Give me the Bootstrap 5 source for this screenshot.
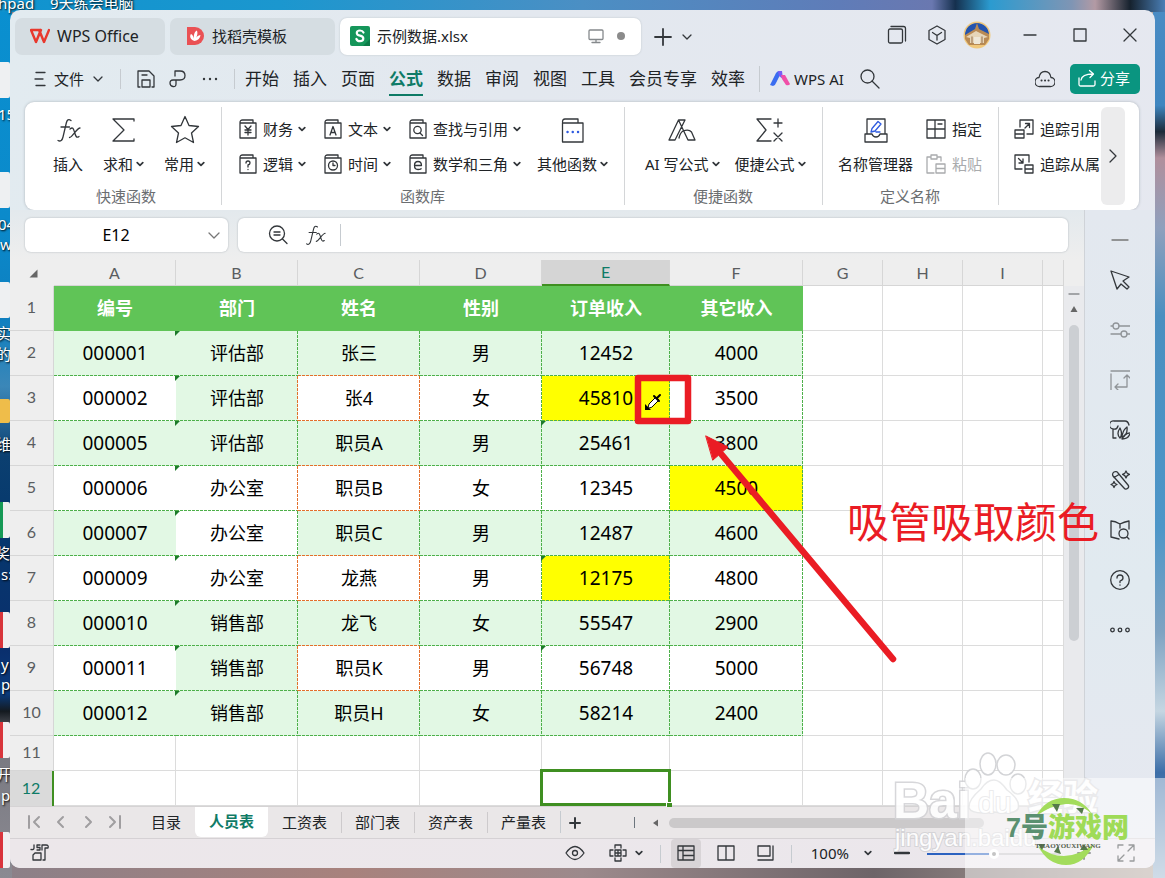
<!DOCTYPE html>
<html lang="zh-CN">
<head>
<meta charset="utf-8">
<meta name="viewport" content="width=device-width, initial-scale=1">
<title>示例数据.xlsx - WPS Office</title>
<link href="https://cdn.jsdelivr.net/npm/bootstrap@5.3.0/dist/css/bootstrap.min.css" rel="stylesheet">
<style>
:root{--ink:#33373b;--teal:#0f7b66;--dash:#4db04a;--warm:#e3702c;--mint:#e2f8e4}
body{font-family:"Noto Sans","Noto Sans CJK SC",sans-serif;font-size:15px;color:#202326;overflow:hidden;
  background:linear-gradient(90deg,#1093cf 0,#1b97cf 24%,#4b8fc4 50%,#5f7cb8 72%,#6a78b0 80%,#15304e 82%,#2b9bd0 85%,#7f95b4 92%,#b39aa4 94%,#16222e 97%,#4a7fb6 100%) top/100% 12px no-repeat,
  linear-gradient(#0a90d0 0,#0b8acb 25%,#0d7fc0 36%,#3b87b8 44%,#0b3f70 52%,#06386d 60%,#0a2f6d 74%,#0a3b7c 79%,#141a20 81%,#77777f 84%,#8b8a92 100%) left/12px 100% no-repeat,
  linear-gradient(#4b8cc4 0,#3f86c0 12%,#1d2b3a 15%,#b08f9c 18%,#8fa0bd 26%,#4a8fc0 36%,#4d96c8 60%,#7fa3c2 72%,#c5d6e2 81%,#3c6ea8 88%,#9fb8cf 100%) right/12px 100% no-repeat,
  linear-gradient(90deg,#8b8088,#a8827d 30%,#9c8a8c 50%,#6d6468 75%,#b7a9a0 100%)}
.desk{position:absolute;inset:0;overflow:hidden;color:#fff;text-shadow:1px 1px 2px #000}
.desk span,.desk i{position:absolute;white-space:nowrap;line-height:20px}
.desk i{left:-14px;width:24px;height:36px;background:#eef0f2;border-radius:2px}
.desk i.red{background:linear-gradient(90deg,#d9343c 17px,#f1eef0 17px)}
.desk i.grn{background:linear-gradient(90deg,#169a55 17px,#eef0ee 17px)}
.desk i.fold{background:#efbd4a;height:24px}
.app{position:relative;margin:10px;min-height:calc(100vh - 20px);border-radius:10px;overflow:hidden;white-space:nowrap;
  background:linear-gradient(100deg,#e2ebf0 0,#e3e8ef 40%,#e6e8f0 100%)}
svg{display:block;fill:none;stroke:var(--ink);stroke-width:1.3;stroke-linecap:round;stroke-linejoin:round;flex:none}
.tool{display:flex;align-items:center;padding:0;border:0;border-radius:4px;background:none;color:inherit;font-size:15px;line-height:24px}
.car{width:8px;height:8px;margin-left:3px;stroke-width:1.7}
.vr2{width:1px;background:#c6cbd0}
/* title tabs */
.titles{height:52px;padding:8px 0 0 5px;gap:5px}
.doc{height:37px;border-radius:7px;background:#d5dde2;padding:0 15px;width:150px;gap:7px;padding-bottom:2px}
.doc.home{font-size:16px}
.doc.find{width:165px}
.doc.on{background:#fff;box-shadow:0 0 2px #b9c0c6;padding:0 10px 2px;width:301px}
.w40{width:40px;justify-content:center}.w50{width:50px;justify-content:center}
/* menu */
.menu{height:34px;padding:0 15px 0 24px}
.menu .tool{padding-bottom:1px}
.menu nav{gap:14px}
.menu nav a{font-size:17px;line-height:28px;color:#202326;text-decoration:none;padding-bottom:3px;margin-top:3px}
.menu nav a.on{color:var(--teal);font-weight:700;border-bottom:2px solid var(--teal);padding-bottom:1px}
.menu .share{background:#0a9580;color:#fff;width:70px;height:30px;border-radius:5px;font-size:15px;padding:0 8px 2px;border:0}
/* ribbon */
.ribbon{height:108px;margin:6px 16px 0 15px;background:#fff;border-radius:9px;box-shadow:0 0 3px #aab2b9;overflow:hidden}
.grp{position:relative;padding:9px 0 0 16px;flex:none}
.grp+.grp::before{content:"";position:absolute;left:0;top:5px;bottom:5px;width:1px;background:#d4d6d8}
.grp>.d-flex{height:72px;align-items:flex-start}
.cap{line-height:20px;color:#6b6e71;margin:3px 0 0 -16px;text-align:center}
.grp:first-child .cap{margin-left:-10px}
.big{flex-direction:column}
.big>svg{height:36px;margin-top:1px}
.big>span{display:flex;align-items:center;line-height:32px}
.duo{display:grid;grid-template-rows:35px 35px;grid-auto-flow:column;column-gap:18px;align-content:start}
.duo .tool>svg:first-child{margin-right:6px}
.duo .car{margin-left:5px}
.more{width:24px;height:98px;margin:5px 14px 5px auto;background:#ececed;border-radius:6px;justify-content:center}
/* formula bar */
.fx{padding:8px 16px 8px 15px;gap:10px}
.box{height:34px;background:#fff;border-radius:6px;box-shadow:0 0 2px #a9b0b6}
.box input{border:0;background:none;outline:0;min-width:0;font-size:16px}
/* sheet */
.left{min-width:0;background:linear-gradient(#e3e9ed,#eeeeee 50px)}
.sheet{table-layout:fixed;width:100%;border-collapse:separate;border-spacing:0;background:#fff}
.sheet th,.sheet td{padding:0 0 2px;text-align:center;vertical-align:middle;border:0 solid #dcdcdc;border-width:0 1px 1px 0;font-size:19px;line-height:24px;color:#000;font-weight:400}
.sheet thead th,.sheet tbody th{font:16px/24px Lato,sans-serif;color:#5a5d60;background:#eee;border-color:#d6d6d6}
.sheet thead th{height:26px;padding:0}
.sheet thead th:first-child{border-right:0;border-bottom:0}
.sheet thead th.on{background:#d5d5d5;color:var(--teal);border-bottom:2px solid #3f8f21}
.sheet tr.h td.k{background:#60c457;color:#fff;font-weight:700;font-size:18px;border:0}
.sheet tr.r,.sheet tr.h{height:45px}
.sheet tr.e{height:35px}
.sheet tr.e.on th{background:#dadada;color:var(--teal);border-right:2px solid #3f8f21;border-bottom:0}
.sheet td.d{--rc:var(--dash);--bc:var(--dash);border:0;position:relative;
  background-image:repeating-linear-gradient(var(--rc) 0 3px,transparent 3px 4px),repeating-linear-gradient(90deg,var(--bc) 0 3px,transparent 3px 4px);
  background-position:right top,left bottom;background-size:1px 100%,100% 1px;background-repeat:no-repeat}
.sheet tr.r.g td.d{background-color:var(--mint)}
.sheet tr.r.g td:nth-child(4){--bc:var(--warm)}
.sheet tr.r.o td:nth-child(3){--rc:var(--warm)}
.sheet tr.r.o td:nth-child(4){--rc:var(--warm);--bc:var(--warm)}
.sheet tr.r td:nth-child(2){--rc:transparent}
.sheet tr.r.z td:nth-child(4){--bc:var(--dash)}
.sheet td.zh{font-size:18px}
.sheet td.m{background-color:var(--mint)}
.sheet tr.r.g td.w{background-color:#fff}
.sheet td.y,.sheet tr.r.g td.y{background-color:#ff0}
.flag::before{content:"";position:absolute;left:-1px;top:0;border:solid transparent;border-width:5px 5px 0 0;border-top-color:#1d7a2a}
.cur{position:relative}
.cur::after{content:"";position:absolute;inset:-2px -2px -1px -2px;border:3px solid #3f8f21}
.cur::before{content:"";position:absolute;right:-3px;bottom:-2px;width:5px;height:4px;background:#3f8f21;border:solid #fff;border-width:1px 0 0 1px;z-index:1;box-sizing:content-box}
.vbar{width:20px;flex:none;margin-top:26px;background:#e9eaed;align-items:center}
.vbar b{width:10px;height:316px;border-radius:5px;background:#cccfd3;margin-top:11px}
.tabs{height:32px;background:#eae7e8;border-top:1px solid #d5d3d4}
.tabs a{color:#202326;text-decoration:none;line-height:31px;padding:0 14px;position:relative}
.tabs a+a+a+a::before{content:"";position:absolute;left:0;top:5px;bottom:5px;width:1px;background:#cdcacc}
.tabs a.on{background:#fff;color:var(--teal);font-weight:700;border-radius:0 0 6px 6px;line-height:28px;height:30px}
.pager{gap:13px;height:30px;padding:0 15px 0 17px}
.hbar{height:10px;border-radius:5px;background:#cbc9ca}
.side{width:71px;flex:none;border-left:1px solid #cfd3d8;background:linear-gradient(#e3e8ef,#e1eaf0 60%,#e6e8f0);align-items:center;padding-top:15px}
.side .tool{width:40px;height:50px;justify-content:center}
.side .tool.mini{height:30px}
.status{height:30px;background:linear-gradient(90deg,#ece7ea,#ebe7ec);border-top:1px solid #d5d1d4}
.status .tool{padding-bottom:1px}
.view{width:30px;height:29px;border-radius:4px;justify-content:center}
.view.on{background:#d8d4d7}
input.zoomer{appearance:none;width:133px;height:12px;background:linear-gradient(90deg,#2b62c0 50%,#c4c2c6 50%) center/100% 2px no-repeat}
input.zoomer::-webkit-slider-thumb{appearance:none;width:10px;height:10px;border-radius:50%;border:3px solid #fff;background:#888}
/* marks lying over the window */
.over{position:absolute;pointer-events:none}
.note{left:837px;top:487px;font-size:42px;line-height:50px;color:#ea1c24}
.veil{left:965px;top:778px;right:0;bottom:0;background:rgba(255,255,255,.5)}
.wm{color:#fff;-webkit-text-stroke:3px #d3d3d6;paint-order:stroke fill;opacity:.9;font-family:"Liberation Sans","Noto Sans CJK SC",sans-serif}
.wm.thin{-webkit-text-stroke-width:2px}
.seven{left:1006px;top:810px;font:900 27px/36px "Liberation Sans","Noto Sans CJK SC",sans-serif;color:#5b9070;white-space:nowrap}
.seven em{font-style:normal;color:#9fdb57}
</style>
</head>
<body>
<svg width="0" height="0" style="position:absolute"><defs>
<symbol id="car" viewBox="0 0 8 8"><path d="M1.2 2.6 4 5.4 6.800 2.600"/></symbol>
<symbol id="bk" viewBox="0 0 18 20"><path d="M1 3.500 Q1 1 3.500 1H14V4M1 4H17V19H1Z"/></symbol>
<symbol id="fxi" viewBox="0 0 26 26"><path d="M16 3.500C13.500 1.500 12 3 11.300 6L8 20C7.400 23 5.500 25 3 23.500M6 10H14.500M15 12C18 9.500 18.500 12 19.500 15C20.500 19 21.500 21.500 24 19.500M25 11C22 11 17 20.500 14.500 20.500"/></symbol>
</defs></svg>

<div class="desk" aria-hidden="true">
<span style="left:-2px;top:-7px">hpad</span><span style="left:50px;top:-7px">9天练会电脑</span>
<i style="top:62px"></i><span style="left:-2px;top:104px">15</span><i style="top:172px"></i><span style="left:-2px;top:214px">04</span><span style="left:0;top:234px">w</span>
<i style="top:282px"></i><span style="left:-4px;top:323px">实</span><span style="left:-4px;top:344px">的</span><i class="fold" style="top:399px"></i><span style="left:-4px;top:434px">维</span>
<i class="grn" style="top:502px"></i><span style="left:-5px;top:543px">奖励</span><span style="left:1px;top:564px">s:</span><i class="red" style="top:612px"></i><span style="left:1px;top:654px">y</span><span style="left:1px;top:674px">p</span>
<i class="red" style="top:722px"></i><span style="left:-4px;top:764px">开</span><span style="left:1px;top:785px">p</span><i class="red" style="top:832px"></i>
</div>

<div class="app d-flex flex-column">
<header>
 <div class="titles d-flex align-items-start">
  <button class="tool doc home"><svg width="20" height="16" viewBox="0 0 20 16" style="stroke:#e8382d;stroke-width:2.400"><path d="M1 2 6 14 10 4 14 14 19 2M1 2H10.500M14 14 9 2M6 14 11 2"/></svg>WPS Office</button>
  <button class="tool doc find"><svg width="20" height="20" viewBox="0 0 20 20" style="stroke:none"><path fill="#ea5154" d="M2 1H10A9 9 0 0 1 10 19H2Z"/><path fill="#fff" d="M9.500 15C4 13 5 9 6 8Q8.500 9 9.500 15C8 9 9.500 5.500 12 4.500Q13.500 9 9.500 15C11 11 13 9 15.500 9Q15 14 9.500 15"/></svg>找稻壳模板</button>
  <button class="tool doc on"><svg width="20" height="20" viewBox="0 0 20 20" style="stroke:none"><rect width="20" height="20" rx="2" fill="#15965a"/><path fill="#0b7a47" d="M13 20H20V13Z"/><path d="M13.500 6.500Q12.500 4.500 10 4.500 6.800 4.500 6.800 7 6.800 9 10 9.600 13.300 10.200 13.300 12.500 13.300 15.200 10 15.200 7.300 15.200 6.400 13" fill="none" stroke="#fff" stroke-width="2.200"/></svg>示例数据.xlsx
   <svg class="ms-auto" width="16" height="16" viewBox="0 0 16 16" style="stroke:#85898c"><rect x="1" y="2" width="14" height="9.500" rx="1"/><path d="M8 12V14M4 14.500H12"/></svg>
   <svg class="ms-1 me-1" width="12" height="12" viewBox="0 0 12 12" style="stroke:none;fill:#8b8b8b"><circle cx="6" cy="6" r="4"/></svg></button>
  <button class="tool ms-2" style="height:37px" aria-label="新建"><svg width="18" height="18" viewBox="0 0 18 18" style="stroke-width:1.800"><path d="M9 1V17M1 9H17"/></svg></button>
  <button class="tool ms-1" style="height:37px" aria-label="列表"><svg width="12" height="12" viewBox="0 0 12 12"><path d="M2 4 6 8 10 4"/></svg></button>
  <div class="d-flex ms-auto align-items-center" style="height:34px">
   <button class="tool w40" aria-label="窗口"><svg width="20" height="20" viewBox="0 0 20 20"><rect x="1.500" y="4" width="14" height="14" rx="1.500"/><path d="M4 1.500H16.500Q18.500 1.500 18.500 3.500V16"/></svg></button>
   <button class="tool w40" aria-label="模型"><svg width="20" height="20" viewBox="0 0 20 20"><path d="M10 1 18 5.500V14.500L10 19 2 14.500V5.500ZM5.500 7.500 10 10.500 14.500 7.500M10 10.500V15"/></svg></button>
   <button class="tool w40 me-2" aria-label="账户"><svg width="28" height="28" viewBox="0 0 28 28" style="stroke:none"><circle cx="14" cy="14" r="13.500" fill="#f0c87c"/><path d="M2 14A12 12 0 0 1 26 14Z" fill="#2454ae"/><path d="M2 14 12 8 14 2 16 8 26 13V18L22 24H6L2 18Z" fill="#b98a54"/><path d="M3 16 13 10 25 16 21 17V22H7V17Z" fill="#e6d5b8"/><path d="M9 16V22M19 16V22" stroke="#a98662"/><path d="M11 16H17V23H11Z" fill="#eee7d8"/></svg></button>
   <button class="tool w50" aria-label="最小化"><svg width="14" height="14" viewBox="0 0 14 14"><path d="M1 7H13"/></svg></button>
   <button class="tool w50" aria-label="最大化"><svg width="14" height="14" viewBox="0 0 14 14"><path d="M1 1H13V13H1Z"/></svg></button>
   <button class="tool w50" aria-label="关闭"><svg width="14" height="14" viewBox="0 0 14 14"><path d="M1 1 13 13M13 1 1 13"/></svg></button>
  </div>
 </div>
 <div class="menu d-flex align-items-center">
  <button class="tool"><svg width="12" height="16" viewBox="0 0 12 16"><path d="M2 1.500H11M1 8H9M2 14.500H11"/></svg><span class="mx-2">文件</span><svg width="12" height="12" viewBox="0 0 12 12"><path d="M2 4 6 8 10 4"/></svg></button>
  <span class="vr2 mx-3" style="height:20px"></span>
  <button class="tool" aria-label="保存"><svg width="18" height="18" viewBox="0 0 18 18"><path d="M3 17H1V1H12L17 6V17H15M5 17V10H13V17ZM5 5H10"/></svg></button>
  <button class="tool" style="margin-left:14px" aria-label="画笔"><svg width="18" height="18" viewBox="0 0 18 18"><path d="M6 6V1H11Q16 1 16 5.500T11 10H4Q1 10 1 13T4 16.500 7 14V10"/></svg></button>
  <button class="tool" style="margin-left:14px" aria-label="更多"><svg width="18" height="6" viewBox="0 0 18 6" style="stroke:none;fill:#33373b"><circle cx="3" cy="3" r="1.200"/><circle cx="9" cy="3" r="1.200"/><circle cx="15" cy="3" r="1.200"/></svg></button>
  <span class="vr2" style="height:20px;margin:0 10px 0 15px"></span>
  <nav class="d-flex align-items-center"><a href="#">开始</a><a href="#">插入</a><a href="#">页面</a><a href="#" class="on">公式</a><a href="#">数据</a><a href="#">审阅</a><a href="#">视图</a><a href="#">工具</a><a href="#">会员专享</a><a href="#">效率</a></nav>
  <span class="vr2" style="height:26px;margin:0 10px 0 14px"></span>
  <button class="tool"><svg width="20" height="18" viewBox="0 0 20 18" style="stroke:none"><path fill="#3b6df0" d="M0 15 6 3Q7 1 10 1H12L6 13Q5 16 3 16Z"/><path fill="#7b5cf5" d="M8 1H12L13 9 9 6Z"/><path fill="#f04fa8" d="M11 5H15L20 14Q19 16 16 15L12 9Z"/></svg><span class="ms-1">WPS AI</span></button>
  <button class="tool ms-3" aria-label="搜索"><svg width="20" height="20" viewBox="0 0 20 20"><circle cx="7.500" cy="7.500" r="6.500"/><path d="M12 12 19 19"/></svg></button>
  <button class="tool ms-auto" aria-label="云"><svg width="20" height="18" viewBox="0 0 20 18"><path d="M5 16.500A4.500 4.500 0 0 1 4 7.500Q5 1.500 10 1.500T16 7.500A4.500 4.500 0 0 1 15 16.500Z"/><path d="M6.500 10.500H6.600M10 10.500H10.100M13.500 10.500H13.600" stroke-width="2"/></svg></button>
  <button class="tool share" style="margin-left:15px"><svg width="18" height="18" viewBox="0 0 18 18" style="stroke:#fff"><path d="M1 9V15.500Q1 17 2.500 17H15.500Q17 17 17 15.500V12M3 11Q4 5 15 5M11.500 1.500 15.500 5 12 8.500"/></svg><span class="ms-1">分享</span></button>
 </div>
</header>

<section class="ribbon d-flex">
 <div class="grp" style="width:196px">
  <div class="d-flex" style="gap:20px;padding-left:12px">
   <button class="tool big"><svg width="30" viewBox="-2 -5 30 36"><use href="#fxi" width="26" height="26"/></svg><span>插入</span></button>
   <button class="tool big"><svg width="24" viewBox="0 -6 24 36"><path d="M22 3V1H1L12 12 1 23H22V21"/></svg><span>求和<svg class="car"><use href="#car"/></svg></span></button>
   <button class="tool big"><svg width="30" viewBox="0 -3 30 36"><path d="M15 1.500 19 10.500 28.500 11.500 21.500 18 23.500 27.500 15 22.800 6.500 27.500 8.500 18 1.500 11.500 11 10.500Z"/></svg><span>常用<svg class="car"><use href="#car"/></svg></span></button>
  </div><div class="cap">快速函数</div>
 </div>
 <div class="grp" style="width:403px">
  <div class="d-flex" style="gap:16px;padding-left:2px"><div class="duo">
   <button class="tool"><svg width="18" height="20"><use href="#bk"/><path d="M6 7 9 10.500 12 7M6 11H12M6 13.500H12M9 10.500V16"/></svg>财务<svg class="car"><use href="#car"/></svg></button>
   <button class="tool"><svg width="18" height="20"><use href="#bk"/><path d="M7 9Q7 7 9 7T11 9Q11 10.500 9 11V13M9 15.500V15.600"/></svg>逻辑<svg class="car"><use href="#car"/></svg></button>
   <button class="tool"><svg width="18" height="20"><use href="#bk"/><path d="M6 16 9 7.500 12 16M7 13.500H11"/></svg>文本<svg class="car"><use href="#car"/></svg></button>
   <button class="tool"><svg width="18" height="20"><use href="#bk"/><circle cx="9" cy="11.500" r="4.500"/><path d="M9 9V11.500H11"/></svg>时间<svg class="car"><use href="#car"/></svg></button>
   <button class="tool"><svg width="18" height="20"><use href="#bk"/><circle cx="8.500" cy="11" r="3.700"/><path d="M11 14 13.500 16.500"/></svg>查找与引用<svg class="car"><use href="#car"/></svg></button>
   <button class="tool"><svg width="18" height="20"><use href="#bk"/><path d="M5.500 11.500H12.500Q12.500 7.500 9 7.500T5.500 11.500 9 15.500 12 14.500"/></svg>数学和三角<svg class="car"><use href="#car"/></svg></button>
  </div>
  <button class="tool big"><svg width="24" viewBox="0 -6 24 36"><path d="M1.500 4Q1.500 1 4 1H17V5M1.500 5H22V24H1.500Z"/><path d="M6.500 14H6.600M11.700 14H11.800M17 14H17.100" stroke="#2f5be0" stroke-width="2.400"/></svg><span>其他函数<svg class="car"><use href="#car"/></svg></span></button></div>
  <div class="cap">函数库</div>
 </div>
 <div class="grp" style="width:198px">
  <div class="d-flex" style="gap:15px;padding-left:5px">
   <button class="tool big"><svg width="28" viewBox="0 -7 28 36"><path d="M10.500 1H17L7 21H1ZM10.500 1 20 21H27L23.500 13Q21 10 15 12M15 12Q12 14 11 19"/></svg><span>AI 写公式<svg class="car"><use href="#car"/></svg></span></button>
   <button class="tool big"><svg width="28" viewBox="0 -6 28 36"><path d="M15 1H1L10 12 1 23H15M18 5H26M22 1V9M18 15 26 23M26 15 18 23"/></svg><span>便捷公式<svg class="car"><use href="#car"/></svg></span></button>
  </div><div class="cap">便捷函数</div>
 </div>
 <div class="grp" style="width:176px">
  <div class="d-flex" style="gap:13px">
   <button class="tool big"><svg width="24" viewBox="0 -6 24 36"><path d="M3 16V1H21V16M1 16H8Q9 19 12 19T16 16H23V24H1Z"/><path d="M7 14 8 10.500 14 3.500 17 6 11 13ZM12 14H16" stroke="#2f5be0"/></svg><span>名称管理器</span></button>
   <div class="duo"><button class="tool"><svg width="20" height="20"><path d="M9 1H1V19H9V1M1 10H9M9 1H19V19H9M9 10H19M12 5H16"/></svg>指定</button>
   <button class="tool" disabled style="color:#a9abad"><svg width="20" height="20" style="stroke:#a9abad"><path d="M4 3H1V19H8M12 3H15V7M5 1H11V5H5ZM10 10H19V19H10ZM10 14.500H19"/></svg>粘贴</button></div>
  </div><div class="cap">定义名称</div>
 </div>
 <div class="grp overflow-hidden" style="width:102px">
  <div class="duo"><button class="tool"><svg width="20" height="20"><path d="M6 8V1H19V15H13M1 11H10V19H1ZM1 15H10M11 9 15.500 4.500M11.500 4.500H15.500V8.500"/></svg>追踪引用</button>
  <button class="tool"><svg width="20" height="20"><path d="M8 15H1V1H15V8M11 11H19V19H11ZM11 15H19M4.500 4.500 9 9M9 5V9H5"/></svg>追踪从属</button></div>
 </div>
 <button class="tool more" aria-label="展开"><svg width="10" height="14" viewBox="0 0 10 14"><path d="M2 1 8 7 2 13"/></svg></button>
</section>

<div class="d-flex flex-grow-1">
 <main class="left d-flex flex-column flex-grow-1">
  <div class="fx d-flex">
   <div class="box d-flex align-items-center" style="width:203px"><input class="text-center ms-3" style="width:150px" aria-label="名称框" value="E12"><button class="tool ms-2 ps-2" aria-label="选择"><svg width="14" height="10" viewBox="0 0 14 10" style="stroke:#777"><path d="M2 3 7 8 12 3"/></svg></button></div>
   <div class="box d-flex align-items-center flex-grow-1 ps-4">
    <button class="tool" style="margin-left:5px" aria-label="查看"><svg width="22" height="20" viewBox="0 0 22 20"><circle cx="10" cy="8.500" r="7.500"/><path d="M15.500 14 20 18.500M7 7H13M7 10H13"/></svg></button>
    <button class="tool" style="margin-left:15px" aria-label="插入函数"><svg width="22" height="22"><use href="#fxi"/></svg></button>
    <span class="vr2 me-2" style="height:22px;margin-left:14px"></span><input class="flex-grow-1" aria-label="编辑栏">
   </div>
  </div>
  <div class="d-flex flex-grow-1">
   <table class="sheet">
    <colgroup><col style="width:44px"><col style="width:122px"><col style="width:122px"><col style="width:122px"><col style="width:122px"><col style="width:128px"><col style="width:133px"><col style="width:80px"><col style="width:80px"><col style="width:80px"><col></colgroup>
    <thead><tr><th><svg class="ms-auto me-3" width="9" height="9"><path d="M8.500 .5V8.500H.5Z" fill="#666" stroke="none"/></svg></th><th>A</th><th>B</th><th>C</th><th>D</th><th class="on">E</th><th>F</th><th>G</th><th>H</th><th>I</th><th></th></tr></thead>
    <tbody>
    <tr class="h"><th>1</th><td class="k">编号</td><td class="k">部门</td><td class="k">姓名</td><td class="k">性别</td><td class="k">订单收入</td><td class="k">其它收入</td><td></td><td></td><td></td><td></td></tr>
    <tr class="r g"><th>2</th><td class="d">000001</td><td class="d zh flag">评估部</td><td class="d zh">张三</td><td class="d zh">男</td><td class="d">12452</td><td class="d">4000</td><td></td><td></td><td></td><td></td></tr>
    <tr class="r o"><th>3</th><td class="d">000002</td><td class="d zh m flag">评估部</td><td class="d zh">张4</td><td class="d zh">女</td><td class="d y">45810</td><td class="d">3500</td><td></td><td></td><td></td><td></td></tr>
    <tr class="r g"><th>4</th><td class="d">000005</td><td class="d zh flag">评估部</td><td class="d zh">职员A</td><td class="d zh">男</td><td class="d flag">25461</td><td class="d">3800</td><td></td><td></td><td></td><td></td></tr>
    <tr class="r o"><th>5</th><td class="d">000006</td><td class="d zh flag">办公室</td><td class="d zh">职员B</td><td class="d zh">女</td><td class="d">12345</td><td class="d y">4500</td><td></td><td></td><td></td><td></td></tr>
    <tr class="r g"><th>6</th><td class="d">000007</td><td class="d zh w flag">办公室</td><td class="d zh">职员C</td><td class="d zh">男</td><td class="d">12487</td><td class="d">4600</td><td></td><td></td><td></td><td></td></tr>
    <tr class="r o"><th>7</th><td class="d">000009</td><td class="d zh flag">办公室</td><td class="d zh">龙燕</td><td class="d zh">男</td><td class="d y flag">12175</td><td class="d">4800</td><td></td><td></td><td></td><td></td></tr>
    <tr class="r g"><th>8</th><td class="d">000010</td><td class="d zh flag">销售部</td><td class="d zh">龙飞</td><td class="d zh">女</td><td class="d">55547</td><td class="d">2900</td><td></td><td></td><td></td><td></td></tr>
    <tr class="r o"><th>9</th><td class="d">000011</td><td class="d zh m flag">销售部</td><td class="d zh">职员K</td><td class="d zh">男</td><td class="d flag">56748</td><td class="d">5000</td><td></td><td></td><td></td><td></td></tr>
    <tr class="r g z"><th>10</th><td class="d">000012</td><td class="d zh flag">销售部</td><td class="d zh">职员H</td><td class="d zh">女</td><td class="d">58214</td><td class="d">2400</td><td></td><td></td><td></td><td></td></tr>
    <tr class="e"><th>11</th><td></td><td></td><td></td><td></td><td></td><td></td><td></td><td></td><td></td><td></td></tr>
    <tr class="e on"><th>12</th><td></td><td></td><td></td><td></td><td class="cur"></td><td></td><td></td><td></td><td></td><td></td></tr>
    </tbody>
   </table>
   <div class="vbar d-flex flex-column"><svg class="mt-1" width="12" height="24" viewBox="0 0 12 24"><path d="M1 4H11" stroke="#8a8d90"/><path d="M6 16 9.500 22H2.500Z" fill="#666" stroke="none"/></svg><b></b></div>
  </div>
  <div class="tabs d-flex align-items-start">
   <div class="pager d-flex align-items-center">
    <button class="tool" aria-label="首个"><svg width="14" height="14" style="stroke:#a09ea0;stroke-width:2"><path d="M2 1V13M12 2 7 7 12 12"/></svg></button>
    <button class="tool" aria-label="上一个"><svg width="14" height="14" style="stroke:#a09ea0;stroke-width:2"><path d="M9 2 4 7 9 12"/></svg></button>
    <button class="tool" aria-label="下一个"><svg width="14" height="14" style="stroke:#a09ea0;stroke-width:2"><path d="M5 2 10 7 5 12"/></svg></button>
    <button class="tool" aria-label="末个"><svg width="14" height="14" style="stroke:#a09ea0;stroke-width:2"><path d="M2 2 7 7 2 12M12 1V13"/></svg></button>
   </div>
   <a href="#">目录</a><a href="#" class="on">人员表</a><a href="#">工资表</a><a href="#">部门表</a><a href="#">资产表</a><a href="#">产量表</a><span class="vr2 my-1" style="height:22px"></span>
   <button class="tool ms-2" style="height:31px" aria-label="新建工作表"><svg width="12" height="12" style="stroke-width:2"><path d="M6 1V11M1 6H11"/></svg></button>
   <span class="d-flex align-items-center flex-grow-1" style="height:31px;padding-left:53px;padding-right:100px"><span class="vr2 bg-secondary" style="height:11px"></span><svg class="ms-3 me-2" width="10" height="10"><path d="M7 1.500V8.500L2 5Z" fill="#666" stroke="none"/></svg><span class="hbar flex-grow-1"></span></span>
  </div>
 </main>
 <aside class="side d-flex flex-column">
  <button class="tool mini" aria-label="收起"><svg width="18" height="4"><path d="M1 2H17" stroke="#777"/></svg></button>
  <button class="tool" aria-label="选择"><svg width="20" height="20"><path d="M1 1 19 7 13 11 19 17 17 19 11 14 7 19Z"/></svg></button>
  <button class="tool" aria-label="设置"><svg width="20" height="20" style="stroke:#909498"><path d="M1 6H3M9 6H20M1 14H11M17 14H20"/><circle cx="6" cy="6" r="3"/><circle cx="14" cy="14" r="3"/></svg></button>
  <button class="tool" aria-label="转换"><svg width="20" height="20" style="stroke:#909498"><path d="M1 1H20M1 4V20M17 6V17H5M14 8 17 5 20 8M8 14 5 17 8 20"/></svg></button>
  <button class="tool" aria-label="模板"><svg width="20" height="20"><path d="M6 18H3V9A4 4 0 0 1 4 1H15Q18 1 19 5M3 9Q7 10 8 6M10 18Q6 14 10 8 13 14 10 18M12 18Q12 11 17 7 18 14 12 18M12 19Q15 13 20 13 19 19 12 19"/></svg></button>
  <button class="tool" aria-label="美化"><svg width="20" height="20"><path d="M3 6A2.800 2.800 0 0 1 8 3L18 15A2.500 2.500 0 0 1 14 18ZM4 7.500 9 4.500M16 1 17.200 3.200 19.400 4.400 17.200 5.600 16 8 14.800 5.600 12.600 4.400 14.800 3.200ZM4 11.500 5 13.500 7 14.500 5 15.500 4 17.500 3 15.500 1 14.500 3 13.500Z"/></svg></button>
  <button class="tool" aria-label="查找"><svg width="20" height="20"><path d="M10 4Q5 1 1 1V17L9 19M10 4Q14 2 19 1V9M10 4V8M17 17 19 19"/><circle cx="13.500" cy="13.500" r="4.500"/></svg></button>
  <button class="tool" aria-label="帮助"><svg width="20" height="20"><circle cx="10" cy="10" r="9.300"/><path d="M7 8Q7 5 10 5T13 8Q13 10 10 11V12.500M10 15V15.200"/></svg></button>
  <button class="tool" aria-label="更多"><svg width="20" height="6"><circle cx="2.500" cy="3" r="1.800"/><circle cx="10" cy="3" r="1.800"/><circle cx="17.500" cy="3" r="1.800"/></svg></button>
 </aside>
</div>
<footer class="status d-flex align-items-center">
 <button class="tool" style="margin-left:20px" aria-label="脚本"><svg width="20" height="18"><path d="M4 1V4Q4 6 1 5.500M10 1H7V3.500H10V6H7M12 6V1H16Q19 1 18 4H15V16H13M3 16V11L5 9H11V16Z"/></svg></button>
 <div class="ms-auto d-flex align-items-center" style="padding-right:20px">
  <button class="tool" aria-label="护眼"><svg width="20" height="16"><path d="M1 8Q10-5 19 8 10 21 1 8Z"/><circle cx="10" cy="8" r="2.500"/></svg></button>
  <button class="tool" style="margin-left:24px" aria-label="聚焦"><svg width="18" height="18"><path d="M6 4V1H12V4M6 14V17H12V14M4 6H1V12H4M14 6H17V12H14M6 6H12V12H6ZM9 6V12M6 9H12"/></svg><svg class="car ms-2"><use href="#car"/></svg></button>
  <span class="vr2" style="height:18px;margin:0 10px 0 17px"></span>
  <div class="d-flex" style="gap:10px"><button class="tool view on" aria-label="普通"><svg width="18" height="18"><path d="M1 2H17V16H1ZM1 6.500H17M6 2V16M6 11.500H17"/></svg></button>
  <button class="tool view" aria-label="分页"><svg width="18" height="18"><path d="M1 2H17V16H1ZM9 2V16"/></svg></button>
  <button class="tool view" aria-label="阅读"><svg width="18" height="18"><path d="M1 2H13V12H1ZM16 2V16H1"/></svg></button></div>
  <span class="vr2" style="height:18px;margin:0 19px 0 10px"></span>
  <button class="tool">100%<svg class="car" style="margin-left:15px"><use href="#car"/></svg></button>
  <button class="tool" style="margin:0 17px 0 22px" aria-label="缩小"><svg width="16" height="4"><path d="M1 2H15" stroke-width="2.400"/></svg></button>
  <input class="zoomer" type="range" aria-label="缩放" value="50">
  <button class="tool" style="margin:0 26px 0 17px" aria-label="放大"><svg width="14" height="14" style="stroke-width:2"><path d="M7 1V13M1 7H13"/></svg></button>
  <button class="tool" aria-label="全屏"><svg width="18" height="18"><path d="M6 1H1V4M12 1H17V6M17 1 11 7M1 12V17H6M1 17 7 11M17 13V17H13"/></svg></button>
 </div>
</footer>

<!-- red marker frame, eyedropper pointer and arrow -->
<svg class="over" style="left:0;top:0" width="900" height="700" viewBox="10 10 900 700"><path d="M638 378H688V421H638Z" stroke="#ea1c24" stroke-width="6.500"/><path d="M893 659 722 455" stroke="#ea1c24" stroke-width="6.500"/><path d="M706 436 728 447 713 460Z" fill="#ea1c24" stroke="#ea1c24" stroke-width="1"/>
<path d="M648 408 649 404 656 397 659 400 652 407Z" fill="#fff" stroke="#000" stroke-width="1"/><path d="M654 396 659 401M657 398 660 395" stroke="#000" stroke-width="2"/><path d="M645 404V410H651Z" fill="#000" stroke="none"/></svg>
<div class="over note">吸管吸取颜色</div>
</div>

<div class="over wm" style="left:893px;top:774px;font-size:50px;line-height:54px;font-weight:700">Bai</div>
<svg class="over" style="left:964px;top:752px;opacity:.9;fill:#fff;stroke:#cfd0d3;stroke-width:1.500" width="64" height="64"><ellipse cx="9" cy="27" rx="8" ry="10"/><ellipse cx="24" cy="12" rx="8" ry="11"/><ellipse cx="42" cy="13" rx="9" ry="10"/><ellipse cx="54" cy="32" rx="8" ry="10"/><path d="M30 28Q36 28 43 38 57 48 54 57 50 63 30 60 8 63 5 56 4 48 17 37 23 28 30 28Z"/></svg>
<div class="over wm thin" style="left:978px;top:786px;font-size:30px;line-height:34px">du</div>
<div class="over wm" style="left:1028px;top:776px;font-size:35px;line-height:44px;font-weight:700">经验</div>
<div class="over wm thin" style="left:895px;top:824px;font-size:24px;line-height:28px">jingyan.baidu</div>
<div class="over veil"></div>
<svg class="over" style="left:1030px;top:796px;stroke:none" width="74" height="72"><path fill="#a3dc5c" d="M6 20Q16 2 34 2T62 18Q50 7 36 8T6 20M8 50Q20 60 34 60T64 48Q54 69 36 69 18 69 8 50"/><path fill="#557a4a" d="M22 8H30L27 16ZM46 12H54L52 18ZM24 56 28 50 31 58ZM8 48H15L12 54ZM50 54 54 48 58 54Z"/></svg>
<div class="over seven">7号<em>游戏网</em></div>
<div class="over" style="left:1035px;top:840px;font:700 7px/12px 'Liberation Serif',serif;color:#55614f">THAOYOUXIWANG</div>
</body>
</html>
